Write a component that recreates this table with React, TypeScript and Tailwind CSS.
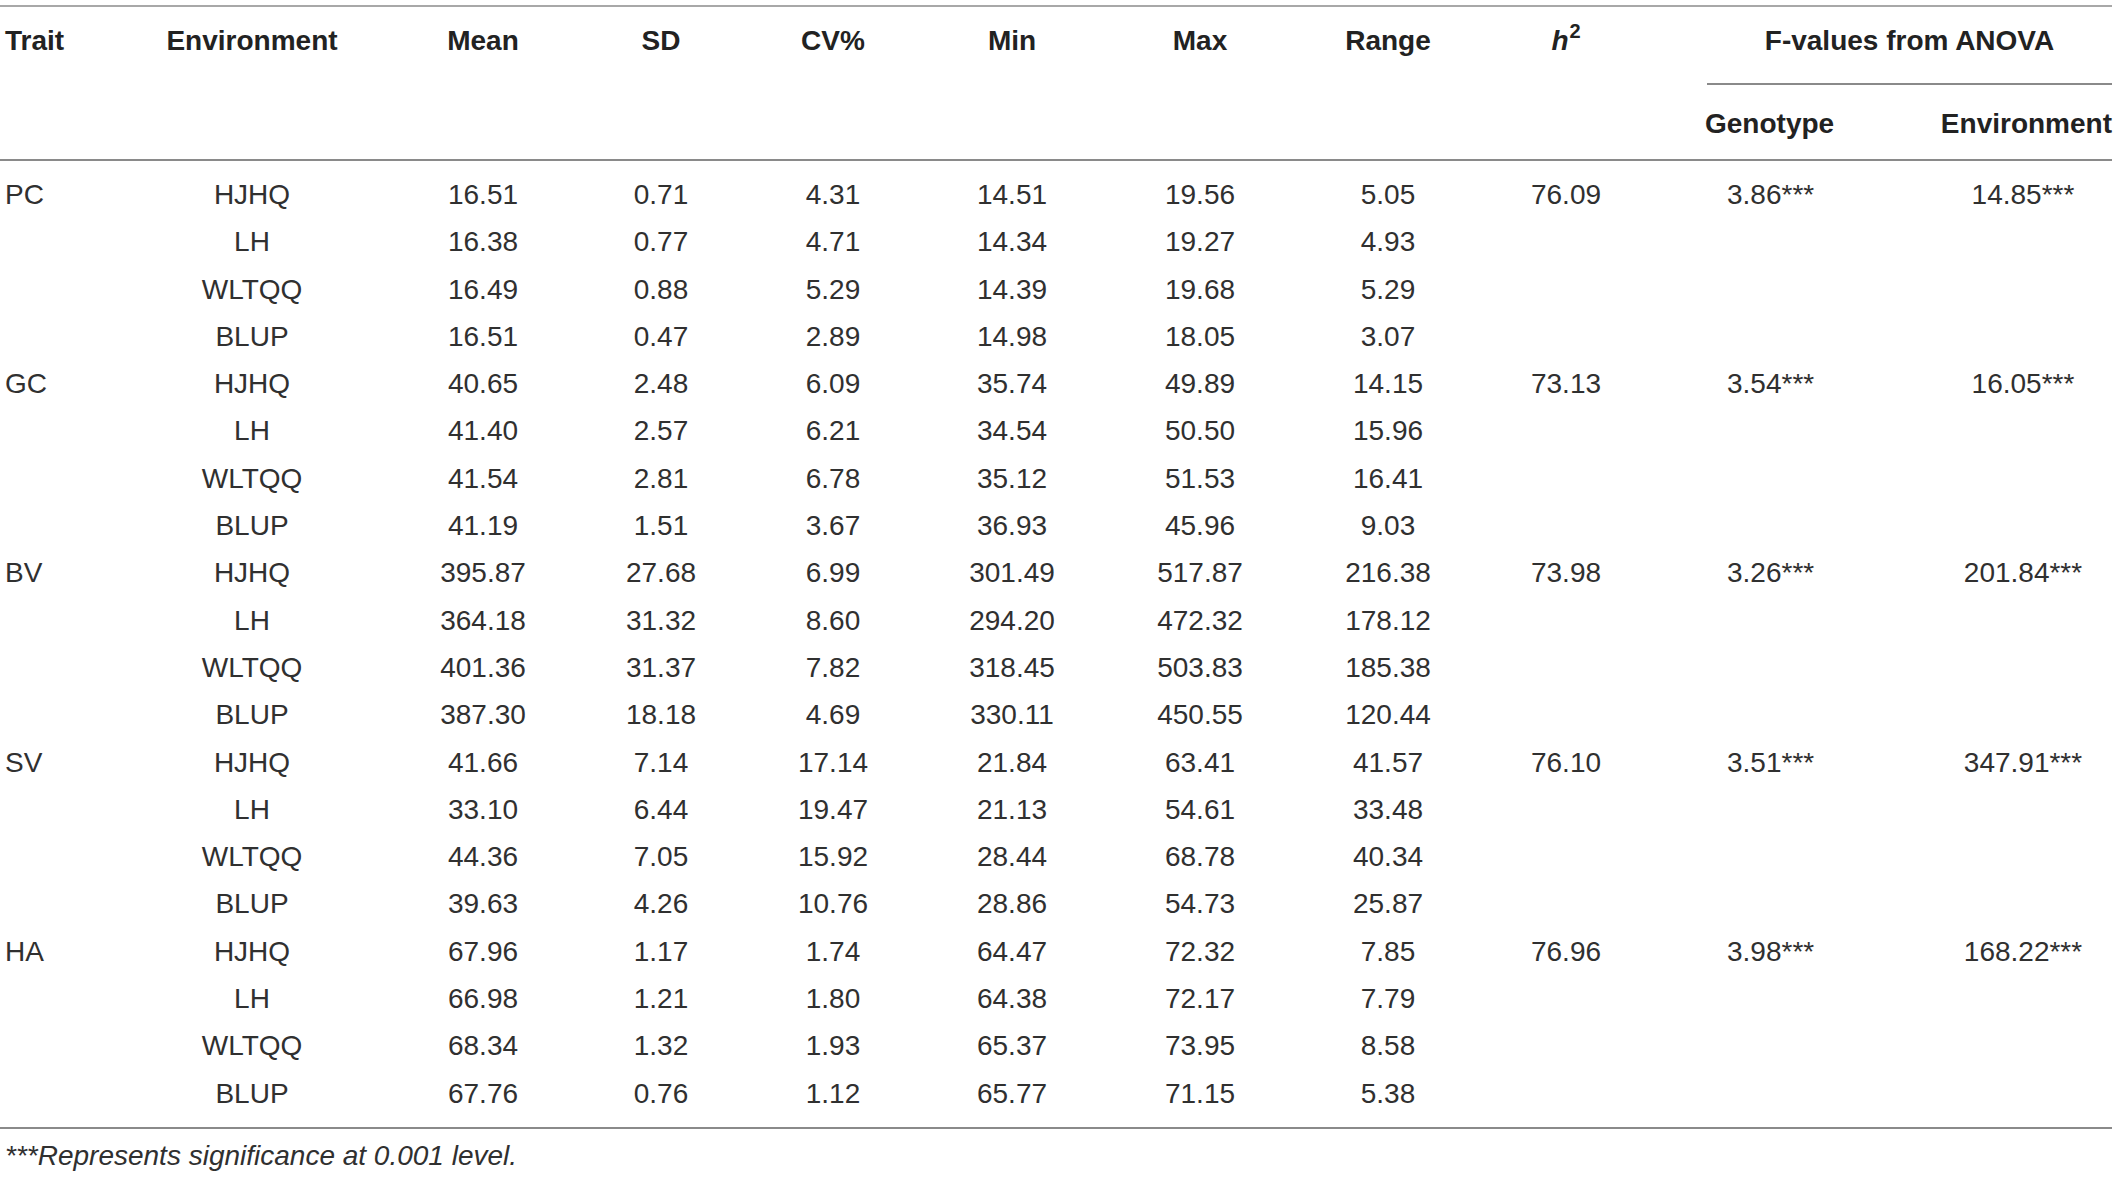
import React from "react";

type Row = {
  trait?: string;
  env: string;
  mean: string;
  sd: string;
  cv: string;
  min: string;
  max: string;
  range: string;
  h2?: string;
  fg?: string;
  fe?: string;
};

const rows: Row[] = [
  { trait: "PC", env: "HJHQ", mean: "16.51", sd: "0.71", cv: "4.31", min: "14.51", max: "19.56", range: "5.05", h2: "76.09", fg: "3.86", fe: "14.85" },
  { env: "LH", mean: "16.38", sd: "0.77", cv: "4.71", min: "14.34", max: "19.27", range: "4.93" },
  { env: "WLTQQ", mean: "16.49", sd: "0.88", cv: "5.29", min: "14.39", max: "19.68", range: "5.29" },
  { env: "BLUP", mean: "16.51", sd: "0.47", cv: "2.89", min: "14.98", max: "18.05", range: "3.07" },
  { trait: "GC", env: "HJHQ", mean: "40.65", sd: "2.48", cv: "6.09", min: "35.74", max: "49.89", range: "14.15", h2: "73.13", fg: "3.54", fe: "16.05" },
  { env: "LH", mean: "41.40", sd: "2.57", cv: "6.21", min: "34.54", max: "50.50", range: "15.96" },
  { env: "WLTQQ", mean: "41.54", sd: "2.81", cv: "6.78", min: "35.12", max: "51.53", range: "16.41" },
  { env: "BLUP", mean: "41.19", sd: "1.51", cv: "3.67", min: "36.93", max: "45.96", range: "9.03" },
  { trait: "BV", env: "HJHQ", mean: "395.87", sd: "27.68", cv: "6.99", min: "301.49", max: "517.87", range: "216.38", h2: "73.98", fg: "3.26", fe: "201.84" },
  { env: "LH", mean: "364.18", sd: "31.32", cv: "8.60", min: "294.20", max: "472.32", range: "178.12" },
  { env: "WLTQQ", mean: "401.36", sd: "31.37", cv: "7.82", min: "318.45", max: "503.83", range: "185.38" },
  { env: "BLUP", mean: "387.30", sd: "18.18", cv: "4.69", min: "330.11", max: "450.55", range: "120.44" },
  { trait: "SV", env: "HJHQ", mean: "41.66", sd: "7.14", cv: "17.14", min: "21.84", max: "63.41", range: "41.57", h2: "76.10", fg: "3.51", fe: "347.91" },
  { env: "LH", mean: "33.10", sd: "6.44", cv: "19.47", min: "21.13", max: "54.61", range: "33.48" },
  { env: "WLTQQ", mean: "44.36", sd: "7.05", cv: "15.92", min: "28.44", max: "68.78", range: "40.34" },
  { env: "BLUP", mean: "39.63", sd: "4.26", cv: "10.76", min: "28.86", max: "54.73", range: "25.87" },
  { trait: "HA", env: "HJHQ", mean: "67.96", sd: "1.17", cv: "1.74", min: "64.47", max: "72.32", range: "7.85", h2: "76.96", fg: "3.98", fe: "168.22" },
  { env: "LH", mean: "66.98", sd: "1.21", cv: "1.80", min: "64.38", max: "72.17", range: "7.79" },
  { env: "WLTQQ", mean: "68.34", sd: "1.32", cv: "1.93", min: "65.37", max: "73.95", range: "8.58" },
  { env: "BLUP", mean: "67.76", sd: "0.76", cv: "1.12", min: "65.77", max: "71.15", range: "5.38" },
];

const GRID =
  "grid grid-cols-[130px_244px_218px_138px_206px_152px_224px_152px_204px_266px_178px]";

export default function App() {
  return (
    <div
      className="bg-white min-h-[1177px] w-[2117px] pt-[5px] text-[#303030]"
      style={{ fontFamily: '"Liberation Sans", Arial, sans-serif' }}
    >
      <div className="w-[2112px]">
        {/* Header */}
        <div className={`${GRID} border-t-2 border-b-2 border-t-[#a8a8a8] border-b-[#8a8a8a] text-[28px] leading-[32px] font-bold text-[#222]`}>
          <div className="row-span-2 pl-[5px] pt-[18px] h-[152px]">Trait</div>
          <div className="row-span-2 text-center pt-[18px]">Environment</div>
          <div className="row-span-2 text-center pt-[18px]">Mean</div>
          <div className="row-span-2 text-center pt-[18px]">SD</div>
          <div className="row-span-2 text-center pt-[18px]">CV%</div>
          <div className="row-span-2 text-center pt-[18px]">Min</div>
          <div className="row-span-2 text-center pt-[18px]">Max</div>
          <div className="row-span-2 text-center pt-[18px]">Range</div>
          <div className="row-span-2 text-center pt-[18px]">
            <i>h</i>
            <span className="inline-block text-[20px] leading-[20px] relative -top-[12px] ml-[1px]">2</span>
          </div>
          <div className="col-span-2 ml-[39px] h-[78px] pt-[18px] text-center border-b-2 border-[#8a8a8a]">
            F-values from ANOVA
          </div>
          <div className="h-[74px] pt-[23px] pl-[37px]">Genotype</div>
          <div className="h-[74px] pt-[23px] text-right">Environment</div>
        </div>

        {/* Body */}
        <div className="pt-[10px] pb-[10px] border-b-2 border-[#8a8a8a] text-[28px] leading-[47.3px]">
          {rows.map((r, i) => (
            <div key={i} className={`${GRID} h-[47.3px]`}>
              <div className="pl-[5px]">{r.trait ?? ""}</div>
              <div className="text-center">{r.env}</div>
              <div className="text-center">{r.mean}</div>
              <div className="text-center">{r.sd}</div>
              <div className="text-center">{r.cv}</div>
              <div className="text-center">{r.min}</div>
              <div className="text-center">{r.max}</div>
              <div className="text-center">{r.range}</div>
              <div className="text-center">{r.h2 ?? ""}</div>
              <div className="pl-[59px]">{r.fg ? `${r.fg}***` : ""}</div>
              <div className="text-center">{r.fe ? `${r.fe}***` : ""}</div>
            </div>
          ))}
        </div>

        {/* Footnote */}
        <div className="pt-[11px] pl-[5px] text-[28px] leading-[32px] italic">
          ***Represents significance at 0.001 level.
        </div>
      </div>
    </div>
  );
}
